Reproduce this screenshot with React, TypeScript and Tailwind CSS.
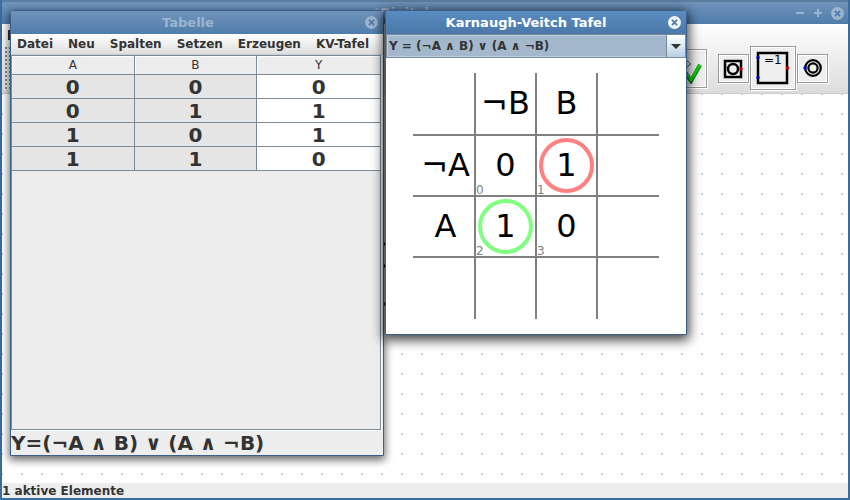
import type { ReactNode } from "react";

const FONT = "font-['DejaVu_Sans',sans-serif]";

function CloseIcon({ faded = false }: { faded?: boolean }) {
  return (
    <svg width="13" height="13" viewBox="0 0 13 13" aria-hidden="true">
      <circle cx="6.5" cy="6.5" r="6.5" fill={faded ? "#9cb5cf" : "#f4f7fa"} />
      <path d="M3.9 3.9l5.2 5.2M9.1 3.9L3.9 9.1" stroke="#4f7dab" strokeWidth="1.8" />
    </svg>
  );
}

function ToolButton({ label, className, children }: { label: string; className: string; children: ReactNode }) {
  return (
    <button
      type="button"
      aria-label={label}
      className={`flex shrink-0 items-center justify-center border border-[#999] bg-[#eee] shadow-[inset_0_0_0_1px_white,1px_1px_0_white] ${className}`}
    >
      {children}
    </button>
  );
}

function MainWindow() {
  return (
    <main className="flex h-screen flex-col border-x-2 border-b-2 border-[#3b6b9f] bg-white">
      <header className="relative flex h-6 shrink-0 items-center justify-center border-t-2 border-[#5b7d9f] bg-linear-to-b from-[#7094bb] to-[#4f7dab] pr-12 text-[13px] font-bold text-[#9cb5cf]">
        <h1>*Digital</h1>
        <div className="absolute inset-y-0 right-1 flex items-center gap-2">
          <button type="button" aria-label="Minimieren">
            <svg width="10" height="10"><path d="M1 5h8" stroke="#9cb5cf" strokeWidth="2" /></svg>
          </button>
          <button type="button" aria-label="Maximieren">
            <svg width="10" height="10"><path d="M1 5h8M5 1v8" stroke="#9cb5cf" strokeWidth="2" /></svg>
          </button>
          <button type="button" aria-label="Schließen"><CloseIcon faded /></button>
        </div>
      </header>
      <div className="h-[70px] shrink-0 border-b border-[#ccc] bg-linear-to-b from-white to-[#dcdcdc]">
        <nav className="flex h-[22px] items-center px-1.5">
          <button type="button" aria-label="Datei" className="h-2.5 w-0.5 bg-[#333]" />
        </nav>
        <div className="flex h-11 items-center pr-5">
          <div className="ml-0.5 h-full w-1.5 bg-[radial-gradient(#888_35%,#eee_40%)] bg-size-[4px_4px]" />
          <ToolButton label="Prüfen" className="mr-[11px] ml-auto h-[39px] w-[51px]">
            <svg width="40" height="32" viewBox="0 0 40 32">
              <path d="M4 4h15l10 8-10 8H4M29 12l-6 4" fill="none" stroke="#777" />
              <path d="M23 20l6 9 9-16" fill="none" stroke="#087008" strokeWidth="4" />
              <path d="M23 20l6 8 9-15" fill="none" stroke="#0dd30d" strokeWidth="2.5" />
            </svg>
          </ToolButton>
          <ToolButton label="Eingang" className="h-[29px] w-[31px]">
            <svg width="21" height="21" viewBox="0 0 21 21">
              <rect x="2" y="3" width="16" height="16" fill="none" stroke="#000" strokeWidth="2.5" />
              <circle cx="10" cy="11" r="5" fill="none" stroke="#000" strokeWidth="2.5" />
              <circle cx="18" cy="11" r="1.7" fill="#c00" />
            </svg>
          </ToolButton>
          <ToolButton label="Exklusiv-Oder" className="mx-px h-11 w-[46px]">
            <svg width="34" height="34" viewBox="0 0 34 34">
              <rect x="2" y="2" width="29" height="30" fill="none" stroke="#000" strokeWidth="2.5" />
              <text x="8" y="13" fontSize="12" fontFamily="DejaVu Sans, sans-serif">=1</text>
              <circle cx="2" cy="6.5" r="1.7" fill="#00c" />
              <circle cx="2" cy="26.5" r="1.7" fill="#00c" />
              <circle cx="31.5" cy="17" r="1.7" fill="#c00" />
            </svg>
          </ToolButton>
          <ToolButton label="Ausgang" className="h-[29px] w-[31px]">
            <svg width="20" height="20" viewBox="0 0 20 20">
              <circle cx="10" cy="10" r="7.8" fill="none" stroke="#000" strokeWidth="2.2" />
              <circle cx="10" cy="10" r="4.6" fill="none" stroke="#000" strokeWidth="2.2" />
              <circle cx="2" cy="10" r="1.7" fill="#00c" />
            </svg>
          </ToolButton>
        </div>
      </div>
      <section aria-label="Schaltung" className="min-h-0 flex-1">
        <svg width="100%" height="100%">
          <defs>
            <pattern id="dots" x="-1" y="-1" width="20" height="20" patternUnits="userSpaceOnUse">
              <rect width="2" height="2" fill="#ccc" />
            </pattern>
          </defs>
          <rect width="100%" height="100%" fill="url(#dots)" />
          <path d="M372 150h30M372 172h30M372 210h30" stroke="#000" strokeWidth="3" />
        </svg>
      </section>
      <footer className="h-[15px] shrink-0 bg-[#ededed] text-xs leading-4 font-bold text-[#333]">1 aktive Elemente</footer>
    </main>
  );
}

const rows = [
  [0, 0, 0],
  [0, 1, 1],
  [1, 0, 1],
  [1, 1, 0],
];

function TableWindow() {
  return (
    <section className="absolute top-2.5 left-2.5 flex h-[446px] w-[374px] flex-col rounded-t-sm border border-[#3b5f89] bg-[#ededed] shadow-[0_3px_8px_1px_rgba(0,0,0,0.6)]">
      <header className="relative flex h-[23px] shrink-0 items-center justify-center bg-linear-to-b from-[#7094bb] to-[#4f7dab] pr-[18px] text-[13px] font-bold text-[#9cb5cf]">
        <h2>Tabelle</h2>
        <button type="button" aria-label="Schließen" className="absolute right-[5px]"><CloseIcon faded /></button>
      </header>
      <nav className="flex h-[21px] shrink-0 items-center gap-[15px] border-b border-[#ccc] bg-linear-to-b from-white to-[#dedede] px-1.5 text-xs font-bold text-[#333]">
        {["Datei", "Neu", "Spalten", "Setzen", "Erzeugen", "KV-Tafel"].map((m) => (
          <button type="button" key={m}>{m}</button>
        ))}
      </nav>
      <div className="mr-0.5 min-h-0 flex-1 border border-[#7a8a99] shadow-[1px_1px_0_white]">
        <table className="w-full table-fixed border-separate border-spacing-0 text-center text-[#333]">
          <thead>
            <tr className="h-[19px] text-xs">
              {["A", "B", "Y"].map((h) => (
                <th key={h} scope="col" className="border-r border-b border-[#7a8a99] p-0 font-normal shadow-[inset_1px_1px_0_white] last:border-r-0">{h}</th>
              ))}
            </tr>
          </thead>
          <tbody>
            {rows.map((r, i) => (
              <tr key={i} className="h-6 text-xl leading-5 font-bold">
                {r.map((v, j) => (
                  <td key={j} className="border-r border-b border-[#7a8a99] bg-[#e5e5e5] p-0 last:border-r-0 last:bg-white">{v}</td>
                ))}
              </tr>
            ))}
          </tbody>
        </table>
      </div>
      <p className="h-[25px] shrink-0 text-xl leading-[27px] font-bold whitespace-nowrap text-[#333]">Y=(¬A ∧ B) ∨ (A ∧ ¬B)</p>
    </section>
  );
}

type Cell = { text?: string; index?: number; ring?: string };
const cells: Cell[] = [
  {}, { text: "¬B" }, { text: "B" }, {},
  { text: "¬A" }, { text: "0", index: 0 }, { text: "1", index: 1, ring: "border-[#ff8080]" }, {},
  { text: "A" }, { text: "1", index: 2, ring: "border-[#80ff80]" }, { text: "0", index: 3 }, {},
  {}, {}, {}, {},
];

function KarnaughWindow() {
  return (
    <section className="absolute top-2.5 left-[385px] w-[302px] rounded-t-sm border border-[#3b5f89] bg-white shadow-[0_3px_12px_2px_rgba(0,0,0,0.75)]">
      <header className="relative flex h-[23px] items-center justify-center bg-linear-to-b from-[#5a8cc2] to-[#4b78a8] pr-5 text-[13px] font-bold text-white">
        <h2>Karnaugh-Veitch Tafel</h2>
        <button type="button" aria-label="Schließen" className="absolute right-[5px]"><CloseIcon /></button>
      </header>
      <div className="relative h-6 border border-[#7a8a99]">
        <select
          aria-label="Ausdruck"
          className="block h-full w-full appearance-none border border-[#b8cfe5] bg-[#a3b8cc] px-px text-xs font-bold text-[#333]"
        >
          <option>Y = (¬A ∧ B) ∨ (A ∧ ¬B)</option>
        </select>
        <div className="pointer-events-none absolute inset-y-0 right-0 flex w-[19px] items-center justify-center border-l border-[#7a8a99] bg-linear-to-b from-white to-[#b8cfe5]">
          <svg width="10" height="5"><path d="M0 0h10L5 5z" fill="#333" /></svg>
        </div>
      </div>
      <div className="px-[27px] pt-[15px] pb-[15px]">
        <div className="grid grid-cols-[63px_61px_61px_61px] grid-rows-[63px_61px_61px_61px]">
          {cells.map((c, i) => (
            <div
              key={i}
              className="relative flex items-center justify-center border-r-2 border-b-2 border-[#808080] pb-0.5 text-[32px] leading-none text-black nth-[4n]:border-r-0 nth-[4n+1]:pl-1 nth-[n+13]:border-b-0"
            >
              {c.ring && <span className={`absolute inset-0.5 rounded-full border-4 ${c.ring}`} />}
              {c.text}
              {c.index !== undefined && (
                <span className="absolute -bottom-px left-0 text-xs leading-3 text-[#808080]">{c.index}</span>
              )}
            </div>
          ))}
        </div>
      </div>
    </section>
  );
}

export default function App() {
  return (
    <div className={`relative h-screen overflow-hidden ${FONT}`}>
      <MainWindow />
      <TableWindow />
      <KarnaughWindow />
    </div>
  );
}
